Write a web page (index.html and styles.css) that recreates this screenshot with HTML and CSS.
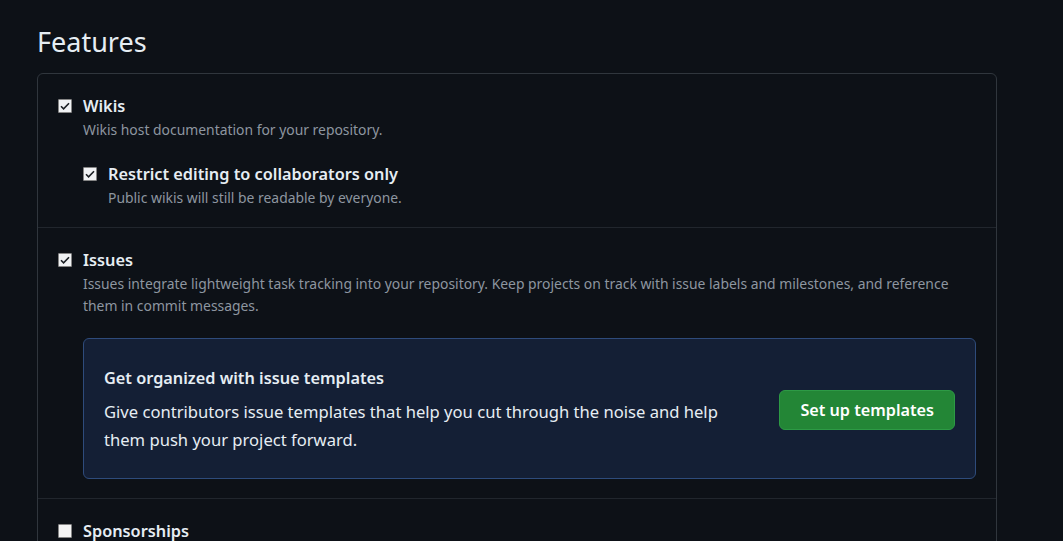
FILE: index.html
```html
<!DOCTYPE html>
<html lang="en">
<head>
<meta charset="utf-8">
<title>Features</title>
<link rel="stylesheet" href="styles.css">
</head>
<body>
<main class="page">
  <h2 class="subhead">Features</h2>
  <div class="box">
    <section class="row">
      <div class="check">
        <span class="cb checked"><svg viewBox="0 0 14 14" width="14" height="14"><path d="M3 7.2l2.6 2.6L11 4.3" fill="none" stroke="#1b1f24" stroke-width="1.6"/></svg></span>
        <div class="check-body">
          <div class="check-title">Wikis</div>
          <div class="check-note">Wikis host documentation for your repository.</div>
        </div>
      </div>
      <div class="check nested">
        <span class="cb checked"><svg viewBox="0 0 14 14" width="14" height="14"><path d="M3 7.2l2.6 2.6L11 4.3" fill="none" stroke="#1b1f24" stroke-width="1.6"/></svg></span>
        <div class="check-body">
          <div class="check-title">Restrict editing to collaborators only</div>
          <div class="check-note">Public wikis will still be readable by everyone.</div>
        </div>
      </div>
    </section>
    <section class="row">
      <div class="check">
        <span class="cb checked"><svg viewBox="0 0 14 14" width="14" height="14"><path d="M3 7.2l2.6 2.6L11 4.3" fill="none" stroke="#1b1f24" stroke-width="1.6"/></svg></span>
        <div class="check-body">
          <div class="check-title">Issues</div>
          <div class="check-note">Issues integrate lightweight task tracking into your repository. Keep projects on track with issue labels and milestones, and reference them in commit messages.</div>
        </div>
      </div>
      <div class="promo">
        <div class="promo-text">
          <div class="promo-title">Get organized with issue templates</div>
          <p class="promo-desc">Give contributors issue templates that help you cut through the noise and help them push your project forward.</p>
        </div>
        <button class="btn-primary" type="button">Set up templates</button>
      </div>
    </section>
    <section class="row">
      <div class="check">
        <span class="cb"></span>
        <div class="check-body">
          <div class="check-title">Sponsorships</div>
        </div>
      </div>
    </section>
  </div>
</main>
</body>
</html>
```
FILE: styles.css
```css
* { box-sizing: border-box; }
html, body {
  margin: 0;
  background: #0d1117;
  color: #e6edf3;
  font-family: "Noto Sans", "Open Sans", sans-serif;
}
.page {
  width: 960px;
  margin-left: 37px;
  padding-top: 24px;
}
.subhead {
  margin: 0 0 13px 0;
  font-size: 27px;
  font-weight: 400;
  line-height: 36px;
  color: #e6edf3;
}
.box {
  border: 1px solid #30363d;
  border-radius: 6px;
  height: 600px;
}
.row {
  padding: 21px 20px 18px 20px;
  border-bottom: 1px solid #21262d;
}
.row:last-child { border-bottom: 0; }
.check {
  display: flex;
  align-items: flex-start;
  gap: 11px;
}
.check.nested {
  margin-left: 25px;
  margin-top: 22px;
}
.cb {
  flex: none;
  width: 14px;
  height: 14px;
  margin-top: 4px;
  background: #f4f4f4;
  border: 1px solid #858585;
  border-radius: 1px;
  display: flex;
}
.cb.checked { background: #f0f2f4; }
.cb svg { display: block; margin: -1px; }
.check-title {
  font-size: 16.3px;
  font-weight: 600;
  line-height: 22px;
  color: #e6edf3;
}
.check-note {
  font-size: 13.9px;
  line-height: 22px;
  color: #8d96a0;
  margin-top: 2px;
}
.promo {
  margin: 21px 0 1px 25px;
  display: flex;
  align-items: center;
  justify-content: space-between;
  padding: 27px 20px 24px 20px;
  background: #141f35;
  border: 1px solid #2e4b7b;
  border-radius: 6px;
}
.promo-title {
  font-size: 16.3px;
  font-weight: 600;
  line-height: 24px;
}
.promo-desc {
  margin: 8px 0 0 0;
  width: 630px;
  font-size: 16.6px;
  line-height: 28px;
  color: #e6edf3;
}
.btn-primary {
  font-family: inherit;
  font-size: 16.2px;
  font-weight: 600;
  color: #ffffff;
  background: #238636;
  border: 1px solid #2d9a45;
  border-radius: 6px;
  height: 40px;
  padding: 0 20px;
  margin-right: 0;
}
```
